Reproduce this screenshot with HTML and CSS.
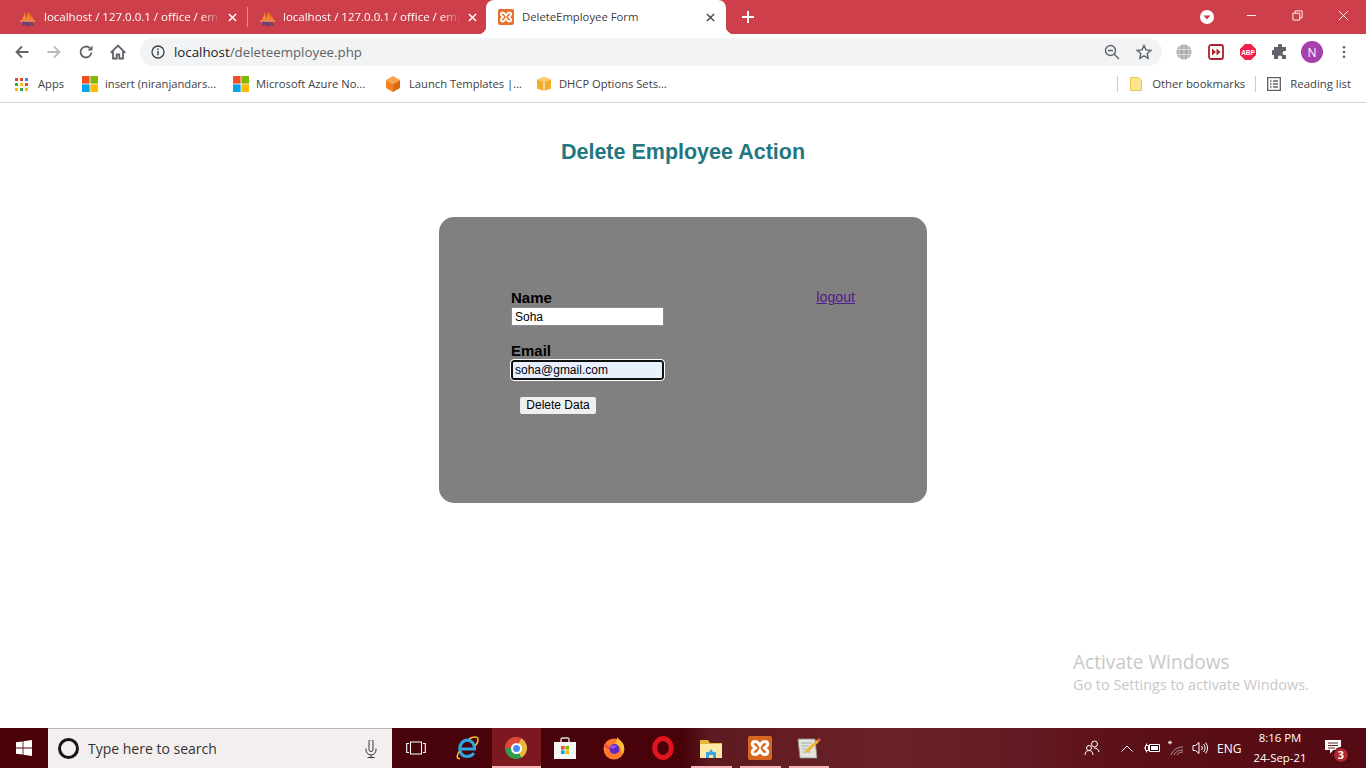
FILE: index.html
```html
<!DOCTYPE html>
<html lang="en">
<head>
<meta charset="utf-8">
<title>DeleteEmployee Form</title>
<link rel="stylesheet" href="styles.css">
</head>
<body>
<div class="screen">
  <header class="tabstrip">
    <div class="tab tab-first">
      <svg class="favicon" viewBox="0 0 17 17"><path d="M3 11 6 3l1.600 8zM7 11l2.500-9L11.500 11zM11.800 11 11 5l4 6z" fill="#ee8a1c"/><path d="M1 11.500h15v1H1z" fill="#f6c37a"/><text x="8.500" y="16.500" class="pma">PMA</text></svg>
      <span class="tab-title">localhost / 127.0.0.1 / office / employee</span>
      <svg class="tab-x" viewBox="0 0 10 10"><path d="M1 1l8 8M9 1l-8 8"/></svg>
    </div>
    <span class="tab-sep"></span>
    <div class="tab tab-second">
      <svg class="favicon" viewBox="0 0 17 17"><path d="M3 11 6 3l1.600 8zM7 11l2.500-9L11.500 11zM11.800 11 11 5l4 6z" fill="#ee8a1c"/><path d="M1 11.500h15v1H1z" fill="#f6c37a"/><text x="8.500" y="16.500" class="pma">PMA</text></svg>
      <span class="tab-title">localhost / 127.0.0.1 / office / employee</span>
      <svg class="tab-x" viewBox="0 0 10 10"><path d="M1 1l8 8M9 1l-8 8"/></svg>
    </div>
    <div class="tab tab-active">
      <svg class="favicon xampp-small" viewBox="0 0 16 16"><rect width="16" height="16" rx="2" fill="#e8702a"/><path d="M4.500 3.500c2 0 2.500 1.500 3.500 3 1-1.500 1.500-3 3.500-3s2 2 1 3l-1.500 1.500 1.500 1.500c1 1 1 3-1 3s-2.500-1.500-3.500-3c-1 1.500-1.500 3-3.500 3s-2-2-1-3L5 8 3.500 6.500c-1-1-1-3 1-3z" fill="none" stroke="#fff" stroke-width="1.800"/></svg>
      <span class="tab-title-active">DeleteEmployee Form</span>
      <svg class="tab-x tab-x-dark" viewBox="0 0 10 10"><path d="M1 1l8 8M9 1l-8 8"/></svg>
    </div>
    <svg class="new-tab" viewBox="0 0 12 12"><path d="M6 0v12M0 6h12"/></svg>
    <div class="window-controls">
      <span class="profile-drop"><svg viewBox="0 0 14 14"><circle cx="7" cy="7" r="7" fill="#fff"/><path d="M3.500 5.500h7L7 9.500z" fill="#cd3f4a"/></svg></span>
      <span class="win-btn"><svg viewBox="0 0 12 12"><path d="M1 6h10"/></svg></span>
      <span class="win-btn"><svg viewBox="0 0 12 12"><path d="M1 3.500h7.500V11H1zM3.500 3.500V1H11v7.500H8.500"/></svg></span>
      <span class="win-btn"><svg viewBox="0 0 12 12"><path d="M1 1l10 10M11 1 1 11"/></svg></span>
    </div>
  </header>

  <nav class="toolbar">
    <span class="tool"><svg viewBox="0 0 16 16"><path class="ink" d="M14.500 8H2.500M8 2.500 2.500 8 8 13.500"/></svg></span>
    <span class="tool"><svg viewBox="0 0 16 16"><path class="ink-off" d="M1.500 8h12M8 2.500 13.500 8 8 13.500"/></svg></span>
    <span class="tool"><svg viewBox="0 0 16 16"><path class="ink" d="M13.500 8.500A5.500 5.500 0 1 1 11.900 4.100"/><path class="solid" d="M14.500 1.500v5h-5z"/></svg></span>
    <span class="tool"><svg viewBox="0 0 16 16"><path class="ink" d="M.7 8.800 8 1.500l7.300 7.300M3 7v7.500h3.700v-4h2.600v4H13V7"/></svg></span>
    <div class="omnibox">
      <svg class="info" viewBox="0 0 14 14"><circle cx="7" cy="7" r="6" fill="none" stroke="#3c4043" stroke-width="1.300"/><path d="M6.300 6h1.400v4.200H6.300zM6.300 3.500h1.400v1.400H6.300z" fill="#3c4043"/></svg>
      <span class="url"><span class="url-host">localhost</span>/deleteemployee.php</span>
      <svg class="omni-icon" viewBox="0 0 16 16"><circle cx="6.500" cy="6.500" r="5" class="ink-thin"/><path class="ink-thin" d="M4 6.500h5M10 10l5 5"/></svg>
      <svg class="omni-icon star" viewBox="0 0 16 16"><path class="ink-thin" d="M8 1.500l2 4.400 4.700.5-3.500 3.200 1 4.700L8 11.900l-4.200 2.400 1-4.700L1.300 6.400 6 5.900z"/></svg>
    </div>
    <span class="tool"><svg viewBox="0 0 16 16"><circle cx="8" cy="8" r="7.500" fill="#a9a9a9"/><path d="M.5 5.500h15M.5 10.500h15M8 .5v15M5 1.500c-2.500 4-2.500 9 0 13M11 1.500c2.500 4 2.500 9 0 13" stroke="#e8e8e8" stroke-width=".8" fill="none"/></svg></span>
    <span class="tool"><svg viewBox="0 0 16 16"><rect x="1" y="1" width="14" height="14" rx="2" fill="#fff" stroke="#a9252b" stroke-width="1.800"/><path d="M4 4.500 8 8l-4 3.500zM8.500 4.500 12.500 8l-4 3.500z" fill="#a9252b"/></svg></span>
    <span class="tool"><svg viewBox="0 0 16 16"><path d="M5 0h6l5 5v6l-5 5H5l-5-5V5z" fill="#ee1f4b"/><text x="8" y="10.500" class="abp">ABP</text></svg></span>
    <span class="tool"><svg viewBox="0 0 16 16"><path fill="#5f6368" d="M6 1.500a2 2 0 0 1 4 0V3h4v4h-1.500a2 2 0 0 0 0 4H14v4h-4v-1.500a2 2 0 0 0-4 0V15H2v-4h-.5a2.500 2.500 0 0 1 0-5H2V3h4z"/></svg></span>
    <span class="tool"><span class="avatar">N</span></span>
    <span class="tool"><svg class="dots" viewBox="0 0 4 16"><circle cx="2" cy="2.500" r="1.500"/><circle cx="2" cy="8" r="1.500"/><circle cx="2" cy="13.500" r="1.500"/></svg></span>
  </nav>

  <nav class="bookmarks">
    <div class="bm bm-apps">
      <svg class="bm-icon-apps" viewBox="0 0 13 13"><g fill="#ea4335"><rect width="3" height="3"/><rect x="5" width="3" height="3"/></g><rect x="10" width="3" height="3" fill="#4285f4"/><rect y="5" width="3" height="3" fill="#34a853"/><rect x="5" y="5" width="3" height="3" fill="#fbbc05"/><rect x="10" y="5" width="3" height="3" fill="#ea4335"/><rect y="10" width="3" height="3" fill="#fbbc05"/><rect x="5" y="10" width="3" height="3" fill="#34a853"/><rect x="10" y="10" width="3" height="3" fill="#fbbc05"/></svg>
      <span>Apps</span>
    </div>
    <div class="bm bm-ms1">
      <svg class="bm-icon bm-icon-wide" viewBox="0 0 16 16"><rect width="7.600" height="7.600" fill="#f25022"/><rect x="8.400" width="7.600" height="7.600" fill="#7fba00"/><rect y="8.400" width="7.600" height="7.600" fill="#00a4ef"/><rect x="8.400" y="8.400" width="7.600" height="7.600" fill="#ffb900"/></svg>
      <span>insert (niranjandars...</span>
    </div>
    <div class="bm bm-ms2">
      <svg class="bm-icon bm-icon-wide" viewBox="0 0 16 16"><rect width="7.600" height="7.600" fill="#f25022"/><rect x="8.400" width="7.600" height="7.600" fill="#7fba00"/><rect y="8.400" width="7.600" height="7.600" fill="#00a4ef"/><rect x="8.400" y="8.400" width="7.600" height="7.600" fill="#ffb900"/></svg>
      <span>Microsoft Azure No...</span>
    </div>
    <div class="bm bm-cube">
      <svg class="bm-icon" viewBox="0 0 16 16"><path d="M8 0l7 4-7 4-7-4z" fill="#f9a24a"/><path d="M1 4l7 4v8l-7-4z" fill="#f58220"/><path d="M15 4 8 8v8l7-4z" fill="#d9680f"/></svg>
      <span>Launch Templates |...</span>
    </div>
    <div class="bm bm-box">
      <svg class="bm-icon bm-icon-wide" viewBox="0 0 16 16"><path d="M8 1l7 2.500v9L8 15l-7-2.500v-9z" fill="#f0ae2b"/><path d="M1 3.500 8 1l7 2.500L8 6z" fill="#f8cf72"/><path d="M7.500 6h1v9h-1z" fill="#fff"/></svg>
      <span>DHCP Options Sets...</span>
    </div>
    <div class="bm-right">
      <span class="bm-sep"></span>
      <div class="bm bm-other">
        <svg class="bm-folder" viewBox="0 0 12 14"><path d="M.5.500h8l3 3V13.500H.5z" fill="#fde68f" stroke="#ecc44b"/></svg>
        <span>Other bookmarks</span>
      </div>
      <span class="bm-sep"></span>
      <div class="bm bm-reading">
        <svg class="bm-list" viewBox="0 0 14 14"><path d="M.7.700h12.600v12.600H.7zM3 4h1.500M6 4h5M3 7h1.500M6 7h5M3 10h1.500M6 10h5" fill="none" stroke="#5f6368" stroke-width="1.300"/></svg>
        <span>Reading list</span>
      </div>
    </div>
  </nav>

  <main class="page">
    <h1 class="page-title">Delete Employee Action</h1>
    <section class="card">
      <form class="emp-form">
        <label class="field-label" for="name">Name</label>
        <input class="field" id="name" type="text" value="Soha">
        <label class="field-label field-label-next" for="email">Email</label>
        <input class="field field-focus" id="email" type="text" value="soha@gmail.com">
        <button class="submit" type="button">Delete Data</button>
      </form>
      <a class="logout" href="#">logout</a>
    </section>
    <div class="watermark">
      <div class="wm-head">Activate Windows</div>
      <div class="wm-sub">Go to Settings to activate Windows.</div>
    </div>
  </main>

  <footer class="taskbar">
    <span class="start"><svg viewBox="0 0 16 16"><path fill="#fff" d="M0 2.300 6.600 1.400v6.200H0zM7.400 1.300 16 0v7.600H7.400zM0 8.400h6.600v6.200L0 13.700zM7.400 8.400H16V16l-8.600-1.300z"/></svg></span>
    <div class="search">
      <span class="cortana"></span>
      <span class="search-text">Type here to search</span>
      <svg class="mic" viewBox="0 0 12 18"><path d="M4 1.500a2 2 0 0 1 4 0v8a2 2 0 0 1-4 0zM1 8.500v1.500a5 5 0 0 0 10 0V8.500M6 15v2.500M2.500 17.500h7" fill="none" stroke="#333" stroke-width="1"/></svg>
    </div>
    <span class="task-view"><svg viewBox="0 0 20 14"><path d="M4.500 1h11v12h-11zM3 2.500H.7v9H3M17 2.500h2.300v9H17" fill="none" stroke="#fff" stroke-width="1.100"/></svg></span>
    <div class="apps">
      <span class="app"><svg viewBox="0 0 24 24"><path d="M5.500 13h14c.3-5.500-3.200-8.800-7.300-8.800S4.800 7.800 4.800 12.800s3.400 7.700 7.400 7.700c3.200 0 5.300-1.300 6.700-3.500" fill="none" stroke="#2fa5e4" stroke-width="3.200"/><path d="M4 15.500C1.500 20 1.500 23 5 22.500M14 3c4-2.500 8.500-3 9 0 .3 2-1 4.500-2.500 6.500" fill="none" stroke="#f2c230" stroke-width="1.500"/></svg></span>
      <span class="app app-chrome"><span class="chrome-logo"><span class="chrome-eye"></span></span></span>
      <span class="app"><svg viewBox="0 0 24 24"><path d="M8 7V3.500a1.500 1.500 0 0 1 1.500-1.500h5A1.500 1.500 0 0 1 16 3.500V7" fill="none" stroke="#ddd" stroke-width="1.400"/><path d="M1 6h22v17H1z" fill="#f5f5f5"/><rect x="8" y="10" width="3.600" height="3.600" fill="#f25022"/><rect x="12.400" y="10" width="3.600" height="3.600" fill="#7fba00"/><rect x="8" y="14.400" width="3.600" height="3.600" fill="#00a4ef"/><rect x="12.400" y="14.400" width="3.600" height="3.600" fill="#ffb900"/></svg></span>
      <span class="app"><svg viewBox="0 0 24 24"><circle cx="12" cy="13" r="10.500" fill="#ff7a2e"/><path d="M15 1c2 3 7 5 7 11 0 3-1 5-2 6-1-7-4-9-7-10 2-2 2-5 2-7z" fill="#ffc12e"/><path d="M2 8c1 4 4 5 8 5-3-3-6-4-8-5z" fill="#f03b5a"/><circle cx="12.500" cy="13" r="5" fill="#5b2bbf"/><path d="M8 11c2-2 5-2 7 0-2 0-3 .5-4 2z" fill="#a05cf0"/></svg></span>
      <span class="app"><svg viewBox="0 0 24 24"><ellipse cx="12" cy="12" rx="8.300" ry="9.500" fill="none" stroke="#e0141c" stroke-width="5"/></svg></span>
      <span class="app"><svg class="app-folder" viewBox="0 0 22 19"><path d="M0 1h8l2 3h12v15H0z" fill="#e6b53c"/><path d="M0 5h22v14H0z" fill="#fde9a6"/><path d="M6 19v-6h3l2-3 2 3h3v6h-3v-3H9v3z" fill="#3ba7e6"/></svg></span>
      <span class="app"><svg viewBox="0 0 24 24"><rect width="24" height="24" rx="2" fill="#d9661f"/><path d="M7 5.500c3 0 4 2 5 4 1-2 2-4 5-4s3.500 3.500 1.500 4.800L16.500 12l2 1.700c2 1.300 1.500 4.800-1.500 4.800s-4-2-5-4c-1 2-2 4-5 4s-3.500-3.500-1.500-4.800l2-1.700-2-1.700C3.500 9 4 5.500 7 5.500z" fill="none" stroke="#fff" stroke-width="3"/></svg></span>
      <span class="app"><svg viewBox="0 0 24 24"><path d="M1 3h17l2 19H3z" fill="#e4e4e0" stroke="#8a8a8a" stroke-width=".8"/><path d="M4 7h11M4 10h8M5 13h6M5 16h9" stroke="#999" stroke-width=".8"/><path d="M22 2l2 2L11 16l-3 1 1-3z" fill="#f0b429"/><path d="M22 2l2 2-2 2-2-2z" fill="#c44"/></svg></span>
    </div>
    <div class="tray">
      <svg class="tray-people" viewBox="0 0 16 16"><circle cx="10.500" cy="4" r="3" fill="none" stroke="#fff"/><circle cx="5" cy="8" r="2.500" fill="none" stroke="#fff"/><path d="M1 15c0-3 1.800-4.500 4-4.500S9 12 9 15M10 8c2.500 0 4.500 1 5 4" fill="none" stroke="#fff"/></svg>
      <svg class="tray-chev" viewBox="0 0 12 7"><path d="M.5 6.500 6 1l5.500 5.500" fill="none" stroke="#fff"/></svg>
      <svg class="tray-batt" viewBox="0 0 16 12"><path d="M5.500 2.500h10v7h-10z" fill="#1a0306" stroke="#fff"/><path d="M7 4h7v4H7z" fill="#fff"/><path d="M0 6h2M1.500 3.500h3v5h-3zM2.500 1.500v2M2.500 8.500v2" fill="none" stroke="#fff"/></svg>
      <svg class="tray-wifi" viewBox="0 0 16 16"><path d="M3 15c2-5 6-8 12-8M6 15c1.500-3 4-5 9-5M9 15c1-2 3-3 6-3" fill="none" stroke="#b5a5a5" stroke-width=".9"/><path d="M0 2.500h4M2 .5v4M.5 1l3 3M3.500 1l-3 3" stroke="#fff" stroke-width=".7"/></svg>
      <svg class="tray-vol" viewBox="0 0 16 14"><path d="M1 4.500h2.500L7 1.500v11l-3.500-3H1z" fill="none" stroke="#fff"/><path d="M9.500 5a3 3 0 0 1 0 4M11.500 3a6 6 0 0 1 0 8M13.500 1.500a9 9 0 0 1 0 11" fill="none" stroke="#fff"/></svg>
      <span class="tray-lang">ENG</span>
      <div class="clock"><div>8:16 PM</div><div>24-Sep-21</div></div>
      <span class="notif">
        <svg viewBox="0 0 16 14"><path fill="#fff" d="M0 0h16v10H8.500L5 13.500V10H0z"/><path d="M3 3h10M3 5.500h10M3 8h7" stroke="#4a0a10" stroke-width=".9"/></svg>
        <span class="notif-badge">3</span>
      </span>
    </div>
  </footer>
</div>
</body>
</html>
```
FILE: styles.css
```css
* { box-sizing: border-box; }
html, body { margin: 0; padding: 0; }
body { width: 1366px; height: 768px; overflow: hidden; background: #fff; font-family: "Open Sans", "Noto Sans", sans-serif; }
svg { display: block; }
.screen { display: flex; flex-direction: column; width: 1366px; height: 768px; }

/* tab strip */
.tabstrip { display: flex; align-items: center; height: 34px; padding-left: 8px; background: #cd3f4a; flex: none; }
.tab { display: flex; align-items: center; height: 34px; flex: none; position: relative; }
.tab-first { width: 239px; padding-left: 11px; }
.tab-second { width: 238px; padding-left: 11px; }
.tab-second .tab-title { margin-left: 7px; width: 177px; }
.tab-sep { width: 1px; height: 20px; background: #e58a90; flex: none; }
.favicon { width: 17px; height: 17px; flex: none; }
.pma { font: bold 5px "Liberation Sans", sans-serif; fill: #2a3f8a; text-anchor: middle; }
.tab-title { width: 176px; margin-left: 8px; font-size: 11.500px; line-height: 16px; color: #fff; white-space: nowrap; overflow: hidden; -webkit-mask-image: linear-gradient(90deg, #000 90%, transparent); mask-image: linear-gradient(90deg, #000 90%, transparent); flex: none; }
.tab-x { width: 9px; height: 9px; margin-left: 8px; flex: none; }
.tab-x path { stroke: #fff; stroke-width: 1.600; fill: none; }
.tab-x-dark path { stroke: #45484c; }
.tab-active { width: 240px; padding-left: 12px; background: #fff; border-radius: 8px 8px 0 0; }
.tab-active::before, .tab-active::after { content: ""; position: absolute; bottom: 0; width: 8px; height: 8px; }
.tab-active::before { left: -8px; background: radial-gradient(circle at 0 0, #cd3f4a 8px, #fff 8.500px); }
.tab-active::after { right: -8px; background: radial-gradient(circle at 100% 0, #cd3f4a 8px, #fff 8.500px); }
.xampp-small { width: 16px; height: 16px; }
.tab-title-active { width: 184px; margin-left: 8px; font-size: 11.300px; line-height: 16px; color: #3c4043; white-space: nowrap; flex: none; }
.tab-active .tab-x { margin-left: 0; }
.new-tab { width: 12px; height: 12px; margin-left: 16px; flex: none; }
.new-tab path { stroke: #fff; stroke-width: 2; fill: none; }
.window-controls { display: flex; align-items: center; margin-left: auto; height: 34px; }
.profile-drop { display: block; width: 14px; height: 14px; margin-right: 14px; }
.win-btn { display: flex; align-items: center; justify-content: center; width: 46px; height: 30px; align-self: flex-start; }
.win-btn svg { width: 11px; height: 11px; }
.win-btn path { fill: none; stroke: #fff; stroke-width: 1; }

/* toolbar */
.toolbar { display: flex; align-items: center; height: 36px; padding-left: 6px; background: #fff; flex: none; }
.tool { display: flex; align-items: center; justify-content: center; width: 32px; height: 32px; flex: none; }
.tool svg { width: 16px; height: 16px; }
.tool .dots { width: 4px; height: 14px; fill: #5f6368; }
.ink, .ink-off, .ink-thin { fill: none; stroke-width: 1.800; stroke-linejoin: miter; }
.ink { stroke: #5f6368; }
.ink-off { stroke: #b8babd; }
.ink-thin { stroke: #5f6368; stroke-width: 1.400; }
.solid { fill: #5f6368; }
.omnibox { display: flex; align-items: center; width: 1022px; height: 28px; margin-left: 6px; margin-right: 6px; padding-left: 11px; padding-right: 10px; background: #f1f3f4; border-radius: 14px; flex: none; }
.info { width: 14px; height: 14px; flex: none; }
.url { margin-left: 9px; font-size: 13.300px; color: #5f6368; white-space: nowrap; }
.url-host { color: #202124; }
.omni-icon { width: 16px; height: 16px; flex: none; margin-left: auto; }
.omni-icon.star { margin-left: 16px; }
.avatar { display: flex; align-items: center; justify-content: center; width: 22px; height: 22px; border-radius: 50%; background: #a640ad; color: #fff; font-size: 12px; }
.abp { font: bold 6.500px "Liberation Sans", sans-serif; fill: #fff; text-anchor: middle; }

/* bookmarks */
.bookmarks { display: flex; align-items: center; height: 33px; padding-bottom: 4px; background: #fff; border-bottom: 1px solid #d4d5d7; font-size: 11.200px; color: #3c4043; flex: none; }
.bm { display: flex; align-items: center; white-space: nowrap; flex: none; }
.bm span { padding-bottom: 2px; }
.bm-icon { width: 16px; height: 16px; flex: none; margin-right: 8px; }
.bm-icon-wide { margin-right: 7px; }
.bm-icon-apps { width: 13px; height: 13px; margin-right: 10px; flex: none; }
.bm-apps { width: 67px; margin-left: 15px; }
.bm-ms1 { width: 151px; }
.bm-ms2 { width: 152px; }
.bm-cube { width: 151px; }
.bm-right { display: flex; align-items: center; margin-left: auto; font-size: 11.350px; }
.bm-sep { width: 1px; height: 16px; background: #c9cbce; flex: none; }
.bm-other { margin-left: 12px; margin-right: 10px; }
.bm-folder { width: 12px; height: 14px; margin-right: 10px; }
.bm-reading { margin-left: 11px; margin-right: 15px; }
.bm-list { width: 14px; height: 14px; margin-right: 9px; }

/* page */
.page { position: relative; flex: 1; display: flex; flex-direction: column; align-items: center; background: #fff; }
.page-title { margin: 35px 0 0; font: bold 21.500px/28px "Liberation Sans", Arial, sans-serif; color: #227780; }
.card { display: flex; justify-content: space-between; align-items: flex-start; width: 488px; height: 286px; margin-top: 51px; padding: 73px 72px 0; background: #808080; border-radius: 15px; font-family: "Liberation Sans", Arial, sans-serif; }
.emp-form { display: flex; flex-direction: column; align-items: flex-start; }
.field-label { font-size: 15px; line-height: 15px; padding-bottom: 2px; font-weight: bold; color: #000; }
.field-label-next { margin-top: 17px; }
.field { width: 153px; height: 19px; padding: 0 3px; border: 1px solid #8c8c8c; background: #fff; font: 12px "Liberation Sans", Arial, sans-serif; color: #000; outline: none; border-radius: 0; }
.field-focus { height: 20px; padding: 0 2px; border: 2px solid #101010; border-radius: 3px; background: #e8f0fe; outline: 1px solid #fff; }
.submit { width: 76px; height: 17px; margin: 17px 0 0 9px; padding: 0 0 2px; border: 0; border-radius: 2px; background: #efefef; font: 12px/14px "Liberation Sans", Arial, sans-serif; color: #000; }
.logout { font-size: 14.200px; line-height: 14px; color: #551a8b; }
.watermark { position: absolute; left: 1073px; top: 547px; color: #c8c8c8; }
.wm-head { font-size: 19.100px; line-height: 24px; }
.wm-sub { font-size: 14.400px; line-height: 22px; }

/* taskbar */
.taskbar { display: flex; align-items: center; height: 40px; background: linear-gradient(90deg, #4a0208 0%, #47020a 50%, #5e1a20 52%, #6a2228 65%, #641a22 75%, #5c1018 82%, #540a12 100%); flex: none; color: #fff; }
.start { display: flex; align-items: center; justify-content: center; width: 48px; height: 40px; flex: none; }
.start svg { width: 16px; height: 16px; }
.search { display: flex; align-items: center; width: 344px; height: 40px; padding-left: 10px; background: #f3efef; border-top: 1px solid #b5b5b5; flex: none; }
.cortana { width: 21px; height: 21px; border: 3px solid #151515; border-radius: 50%; flex: none; }
.search-text { margin-left: 9px; font-size: 14px; color: #333; white-space: nowrap; }
.mic { width: 12px; height: 18px; margin-left: auto; margin-right: 15px; flex: none; }
.task-view { display: flex; align-items: center; justify-content: center; width: 48px; height: 40px; flex: none; }
.task-view svg { width: 20px; height: 14px; }
.apps { display: flex; align-items: center; height: 40px; margin-left: 3px; flex: none; }
.app { display: flex; align-items: center; justify-content: center; width: 48.800px; height: 40px; position: relative; flex: none; }
.app svg { width: 24px; height: 24px; }
.app .app-folder { width: 22px; height: 19px; }
.app::after { content: ""; position: absolute; left: 4px; right: 4px; bottom: 0; height: 2px; }
.app:nth-child(6)::after, .app:nth-child(7)::after, .app:nth-child(8)::after { background: #f3b4b8; }
.app-chrome { background: #7d1820; }
.app-chrome::after { left: 0; right: 0; background: #f3b4b8; }
.chrome-logo { display: flex; align-items: center; justify-content: center; width: 22px; height: 22px; border-radius: 50%; background: conic-gradient(#e0483a 0 30deg, #e9b83a 30deg 150deg, #2f9e4f 150deg 270deg, #e0483a 270deg); }
.chrome-eye { width: 11px; height: 11px; border-radius: 50%; background: #4c8bf5; border: 2px solid #fff; }
.tray { display: flex; align-items: center; height: 40px; margin-left: auto; flex: none; }
.tray-people { width: 16px; height: 16px; margin-right: 21px; }
.tray-chev { width: 12px; height: 7px; margin-right: 11px; }
.tray-batt { width: 16px; height: 12px; margin-right: 8px; }
.tray-wifi { width: 16px; height: 16px; margin-right: 8px; }
.tray-vol { width: 16px; height: 14px; margin-right: 9px; }
.tray-lang { width: 24px; font-size: 12px; margin-right: 8px; }
.clock { width: 62px; font-size: 11.400px; line-height: 20px; text-align: center; margin-right: 14px; }
.notif { position: relative; display: block; width: 17px; height: 14px; margin-right: 24px; margin-bottom: 3px; }
.notif svg { width: 16px; height: 14px; }
.notif-badge { position: absolute; left: 8px; top: 7px; display: flex; align-items: center; justify-content: center; width: 16px; height: 16px; border-radius: 50%; background: #b3242c; border: 1px solid #3a060a; color: #fff; font-size: 11px; font-weight: bold; }
```
